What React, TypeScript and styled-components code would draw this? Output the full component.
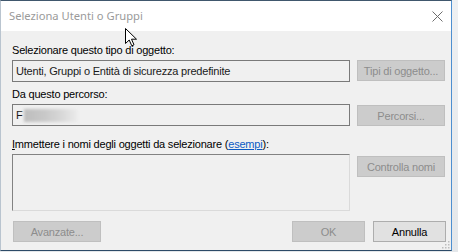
import React from 'react';
import styled, { createGlobalStyle } from 'styled-components';

const GlobalStyle = createGlobalStyle`
  html, body {
    margin: 0;
    padding: 0;
    background: #e9ecef;
  }
`;

const App: React.FC = () => {
  return (
    <>
      <GlobalStyle />
      <Page>
        <Window>
          <TitleBar>
            <Title>Seleziona Utenti o Gruppi</Title>
            <CloseButton aria-label="Chiudi">
              <svg width="11" height="11" viewBox="0 0 11 11">
                <path d="M0.5 0.5 L10.5 10.5 M10.5 0.5 L0.5 10.5" stroke="#6d6d6d" strokeWidth="1" fill="none" />
              </svg>
            </CloseButton>
          </TitleBar>

          <Body>
            <Group $top={13}>
              <Label>Selezionare questo tipo di oggetto:</Label>
              <FieldRow>
                <TextBox>Utenti, Gruppi o Entità di sicurezza predefinite</TextBox>
                <Button disabled $offset={0}>Tipi di oggetto...</Button>
              </FieldRow>
            </Group>

            <Group $top={6}>
              <Label>Da questo percorso:</Label>
              <FieldRow>
                <TextBox>
                  F<Blurred />
                </TextBox>
                <Button disabled $offset={1}>Percorsi...</Button>
              </FieldRow>
            </Group>

            <Group $top={12}>
              <Label>
                <u>I</u>mmettere i nomi degli oggetti da selezionare (<Link>esempi</Link>):
              </Label>
              <FieldRow>
                <NamesArea />
                <Button disabled $offset={2}>Controlla nomi</Button>
              </FieldRow>
            </Group>

            <Footer>
              <Button disabled $width={88}>Avanzate...</Button>
              <Spacer />
              <Button disabled $width={73}>OK</Button>
              <Button $width={73}>Annulla</Button>
            </Footer>
          </Body>

          <Cursor width="13" height="19" viewBox="0 0 13 19">
            <path d="M0.5 0.5 L0.5 15.5 L4.2 12 L6.8 17.8 L9 16.8 L6.5 11.2 L11.5 11.2 Z" fill="#fff" stroke="#000" strokeWidth="1" strokeLinejoin="miter" />
          </Cursor>

          <Grip width="9" height="9" viewBox="0 0 9 9">
            <rect x="7" y="1" width="1.5" height="1.5" fill="#bdbdbd" />
            <rect x="4" y="4" width="1.5" height="1.5" fill="#bdbdbd" />
            <rect x="7" y="4" width="1.5" height="1.5" fill="#bdbdbd" />
            <rect x="1" y="7" width="1.5" height="1.5" fill="#bdbdbd" />
            <rect x="4" y="7" width="1.5" height="1.5" fill="#bdbdbd" />
            <rect x="7" y="7" width="1.5" height="1.5" fill="#bdbdbd" />
          </Grip>
        </Window>
      </Page>
    </>
  );
};

export default App;

const Page = styled.div`
  width: 458px;
  height: 252px;
  display: flex;
  align-items: flex-start;
  background: linear-gradient(#eef0f2, #e4e7ea);
  overflow: hidden;
`;

const Window = styled.div`
  position: relative;
  width: 452px;
  height: 251px;
  box-sizing: border-box;
  display: flex;
  flex-direction: column;
  background: #f0f0f0;
  border-top: 1px solid #40576d;
  border-left: 1px solid #b9c4cf;
  border-right: 1px solid #4d8fd0;
  border-bottom: 1px solid #2d4b68;
  font-family: "Liberation Sans", Arial, sans-serif;
  font-size: 11px;
  letter-spacing: -0.2px;
  color: #000;
`;

const TitleBar = styled.div`
  height: 30px;
  flex-shrink: 0;
  display: flex;
  align-items: center;
  justify-content: space-between;
  background: #fff;
  padding: 0 4px 0 8px;
`;

const Title = styled.span`
  font-family: "Noto Sans", "Open Sans", sans-serif;
  font-size: 11.2px;
  letter-spacing: 0;
  color: #9a9a9a;
  margin-top: -1px;
`;

const CloseButton = styled.div`
  width: 20px;
  height: 20px;
  display: flex;
  align-items: center;
  justify-content: center;
  margin-top: 1px;
`;

const Body = styled.div`
  flex: 1;
  display: flex;
  flex-direction: column;
  padding: 0 5px 0 11px;
`;

const Group = styled.div<{ $top: number }>`
  margin-top: ${(p) => p.$top}px;
  display: flex;
  flex-direction: column;
  gap: 3px;
`;

const Label = styled.div`
  line-height: 13px;
  height: 13px;
  white-space: nowrap;

  u {
    text-decoration: underline;
  }
`;

const Link = styled.span`
  color: #0b5bc4;
  text-decoration: underline;
`;

const FieldRow = styled.div`
  display: grid;
  grid-template-columns: 338px 88px;
  column-gap: 7px;
  align-items: start;
`;

const TextBox = styled.div`
  height: 22px;
  box-sizing: border-box;
  border: 1px solid #7a7a7a;
  background: #f0f0f0;
  padding: 0 3px;
  display: flex;
  align-items: center;
  white-space: nowrap;
  color: #1a1a1a;
`;

const Blurred = styled.span`
  display: inline-block;
  width: 54px;
  height: 13px;
  margin-left: 1px;
  background: linear-gradient(90deg, #bdbdbd, #c9c9c9 40%, #d8d8d8 70%, #ececec);
  filter: blur(1.5px);
`;

const NamesArea = styled.div`
  height: 57px;
  box-sizing: border-box;
  background: #f0f0f0;
  border-top: 1px solid #828282;
  border-left: 1px solid #828282;
  border-right: 1px solid #dadada;
  border-bottom: 1px solid #dadada;
`;

const Button = styled.button<{ $offset?: number; $width?: number }>`
  width: ${(p) => (p.$width ? `${p.$width}px` : '88px')};
  height: 21px;
  margin-top: ${(p) => p.$offset ?? 0}px;
  box-sizing: border-box;
  padding: 0;
  font-family: "Liberation Sans", Arial, sans-serif;
  font-size: 11px;
  letter-spacing: -0.2px;
  background: #e1e1e1;
  border: 1px solid #adadad;
  color: #000;
  white-space: nowrap;

  &:disabled {
    background: #cccccc;
    border-color: #bfbfbf;
    color: #8d8d8d;
  }
`;

const Footer = styled.div`
  margin-top: 10px;
  display: flex;
  align-items: center;
  gap: 8px;
  padding-left: 1px;
`;

const Spacer = styled.div`
  flex: 1;
`;

const Cursor = styled.svg`
  position: absolute;
  left: 124px;
  top: 27px;
`;

const Grip = styled.svg`
  position: absolute;
  right: 1px;
  bottom: 1px;
`;
